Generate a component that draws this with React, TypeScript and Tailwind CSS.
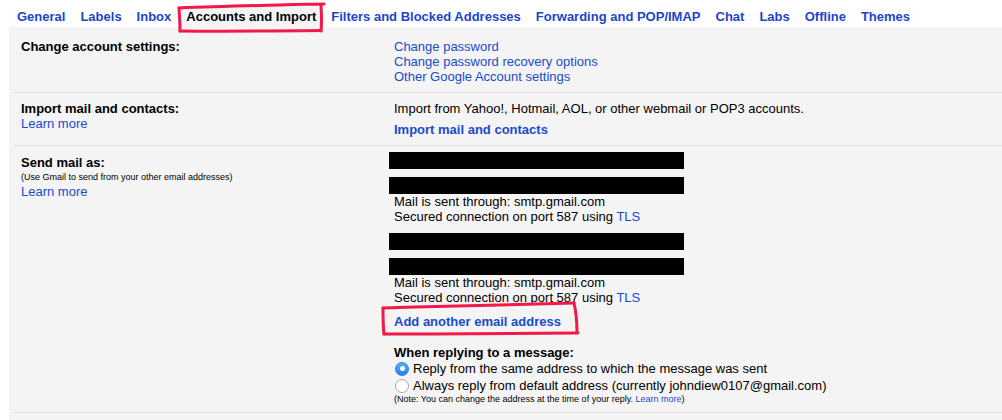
import React from "react";

const tabs = [
  "General",
  "Labels",
  "Inbox",
  "Accounts and Import",
  "Filters and Blocked Addresses",
  "Forwarding and POP/IMAP",
  "Chat",
  "Labs",
  "Offline",
  "Themes",
];

function Bar({ className = "" }: { className?: string }) {
  return <div className={`ml-[-5px] h-[17px] w-[295px] bg-black ${className}`} />;
}

export default function App() {
  return (
    <div className="relative h-[420px] w-[1002px] overflow-hidden bg-white font-['Liberation_Sans',Arial,sans-serif] text-[13px] leading-[15px] text-black">
      {/* Tabs */}
      <div className="flex h-[27px] items-end gap-[1px] pl-[10px]">
        {tabs.map((t) => (
          <div
            key={t}
            className={
              t === "Accounts and Import"
                ? "h-[21px] bg-[#f4f4f4] px-[7px] text-[13px] font-bold leading-[21px] text-black"
                : "h-[21px] px-[7px] text-[13px] font-bold leading-[21px] text-[#1c45cc]"
            }
          >
            {t}
          </div>
        ))}
      </div>

      {/* Panel */}
      <div className="ml-[9px] h-[393px] bg-[#f4f4f4] pl-[4px]">
        {/* Row 1 */}
        <div className="flex border-b border-[#e0e0e0] pt-[12px] pb-[8px]">
          <div className="w-[381px] shrink-0 pl-2 font-bold">Change account settings:</div>
          <div className="flex flex-col text-[#1a4bcc]">
            <span>Change password</span>
            <span>Change password recovery options</span>
            <span>Other Google Account settings</span>
          </div>
        </div>

        {/* Row 2 */}
        <div className="flex border-b border-[#e0e0e0] pt-[8px] pb-[8px]">
          <div className="flex w-[381px] shrink-0 flex-col pl-2">
            <span className="font-bold">Import mail and contacts:</span>
            <span className="text-[#1a4bcc]">Learn more</span>
          </div>
          <div className="flex flex-col">
            <span>Import from Yahoo!, Hotmail, AOL, or other webmail or POP3 accounts.</span>
            <span className="mt-[6px] font-bold text-[#1a4bcc]">Import mail and contacts</span>
          </div>
        </div>

        {/* Row 3 */}
        <div className="flex border-b border-[#e0e0e0] pb-[7px]">
          <div className="flex w-[381px] shrink-0 flex-col pt-[9px] pl-2">
            <span className="font-bold">Send mail as:</span>
            <span className="mt-[1px] text-[9px] leading-[12px]">
              (Use Gmail to send from your other email addresses)
            </span>
            <span className="mt-[1px] text-[#1a4bcc]">Learn more</span>
          </div>
          <div className="flex flex-col pt-[6px]">
            <Bar />
            <Bar className="mt-[8px]" />
            <span>Mail is sent through: smtp.gmail.com</span>
            <span>
              Secured connection on port 587 using <span className="text-[#1a4bcc]">TLS</span>
            </span>
            <Bar className="mt-[9px]" />
            <Bar className="mt-[8px]" />
            <span>Mail is sent through: smtp.gmail.com</span>
            <span>
              Secured connection on port 587 using <span className="text-[#1a4bcc]">TLS</span>
            </span>
            <span className="mt-[9px] font-bold text-[#1a4bcc]">Add another email address</span>
            <span className="mt-[16px] font-bold">When replying to a message:</span>
            <div className="flex h-[17px] items-center">
              <span className="ml-[1px] flex h-[14px] w-[14px] items-center justify-center rounded-full border border-[#2f84e8] bg-gradient-to-b from-[#5aaeff] to-[#1f7ef2]">
                <span className="h-[5px] w-[5px] rounded-full bg-white" />
              </span>
              <span className="ml-[4px]">Reply from the same address to which the message was sent</span>
            </div>
            <div className="flex h-[17px] items-center">
              <span className="ml-[1px] h-[14px] w-[14px] rounded-full border border-[#a8a8a8] bg-white" />
              <span className="ml-[4px]">
                Always reply from default address (currently johndiew0107@gmail.com)
              </span>
            </div>
            <span className="text-[9px] leading-[11px]">
              (Note: You can change the address at the time of your reply.{" "}
              <span className="text-[#1a4bcc]">Learn more</span>)
            </span>
          </div>
        </div>
      </div>

      {/* Hand-drawn red annotations */}
      <svg
        className="pointer-events-none absolute left-0 top-0"
        width="1002"
        height="420"
        viewBox="0 0 1002 420"
        fill="none"
        stroke="#f2184a"
        strokeWidth="3"
        strokeLinecap="round"
        strokeLinejoin="round"
      >
        <path d="M179 8 C 230 6, 280 5, 324 4" />
        <path d="M179 8 C 179.5 16, 180 24, 180 31" />
        <path d="M180 31 C 230 31.5, 280 31, 321 30.5" />
        <path d="M321 5 C 321.5 14, 322 22, 321 31" />

        <path d="M383 308 C 450 306, 520 304, 574 303" />
        <path d="M383 308 C 383 316, 383 326, 384 334" />
        <path d="M384 334 C 450 334, 520 333.5, 578 333" />
        <path d="M574 303 C 576 312, 577 322, 577 332" />
      </svg>
    </div>
  );
}
